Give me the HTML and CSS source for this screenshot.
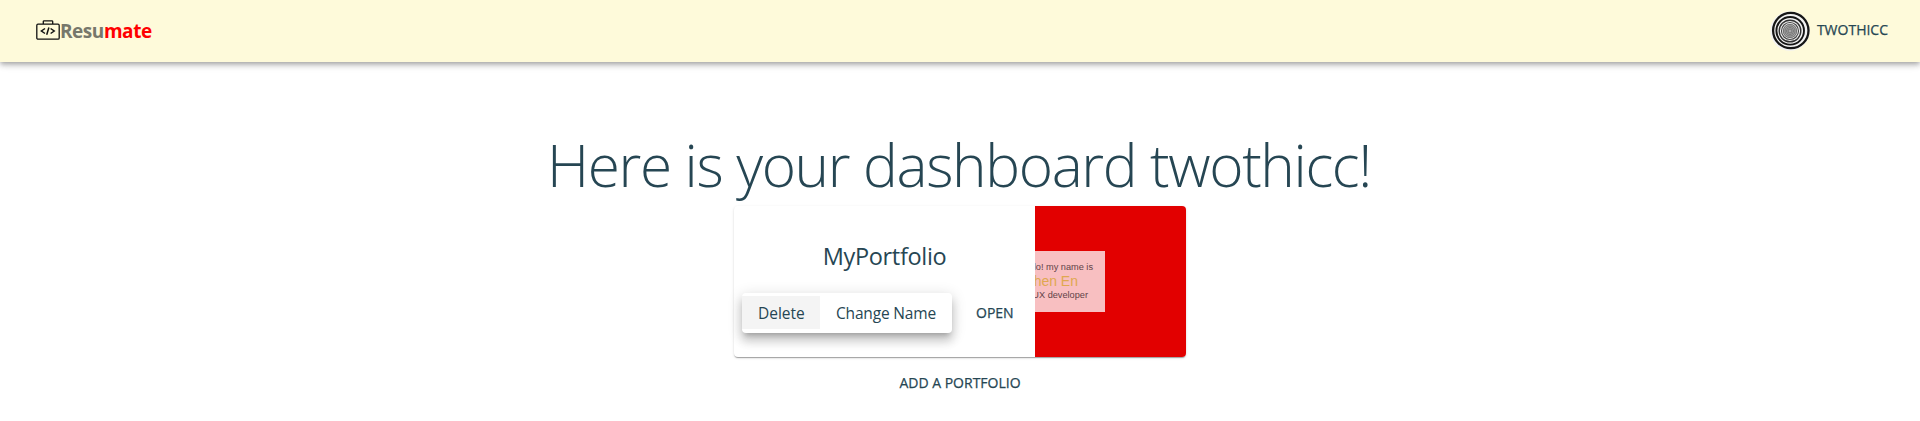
FILE: index.html
```
<!DOCTYPE html>
<html lang="en">
<head>
<meta charset="utf-8">
<title>Resumate</title>
<link rel="stylesheet" href="styles.css">
</head>
<body>
<header class="bar">
  <a class="brand">
    <svg class="brand-icon" width="24" height="20" viewBox="0 0 24 20" fill="none" stroke="#111" stroke-width="1.3">
      <rect x=".8" y="4.2" width="22.4" height="15" rx="1.2"/>
      <path d="M7.3 4V1.6q0-.8.8-.8h7.8q.8 0 .8.8V4"/>
      <path stroke-width="1.500" d="M9 8.500l-3.600 2.500L9 13.500M14.600 8.500l3.600 2.500-3.600 2.500M12.900 7.500l-2.200 7.200"/>
    </svg>
    <span class="brand-a">Resu</span><span class="brand-b">mate</span>
  </a>
  <div class="user">
    <svg class="avatar" width="40" height="40" viewBox="0 0 40 40" fill="none">
      <circle cx="20" cy="20" r="19.700" fill="#f2f2f2"/>
      <g stroke="#161616">
        <circle cx="20.800" cy="19.500" r="17.700" stroke-width="2.300"/>
        <circle cx="20.200" cy="19.800" r="13.800" stroke-width="1.900"/>
        <circle cx="20" cy="20" r="10.800" stroke-width="1.400" stroke="#333"/>
        <circle cx="20" cy="20" r="8.500" stroke-width="1.100" stroke="#444"/>
      </g>
      <circle cx="20" cy="20" r="7.300" fill="#aaa"/>
      <g stroke="#666" stroke-width=".8">
        <circle cx="20" cy="20" r="6.600"/>
        <circle cx="20" cy="20" r="5"/>
        <circle cx="20" cy="20" r="3.500"/>
        <circle cx="20" cy="20" r="2"/>
      </g>
    </svg>
    <span class="user-name">TWOTHICC</span>
  </div>
</header>
<main class="page">
  <h1 class="title">Here is your dashboard twothicc!</h1>
  <section class="card">
    <div class="card-body">
      <h2 class="card-title">MyPortfolio</h2>
      <div class="actions">
        <div class="menu">
          <span class="item item-active"><span class="delete">Delete</span></span>
          <span class="item"><span class="rename">Change Name</span></span>
        </div>
        <span class="open">OPEN</span>
      </div>
    </div>
    <div class="preview">
      <div class="snippet">
        <span class="line hello">lo! my name is</span>
        <span class="line name">hen En</span>
        <span class="line role">UX developer</span>
      </div>
    </div>
  </section>
  <span class="add">ADD A PORTFOLIO</span>
</main>
</body>
</html>
```
FILE: styles.css
```
* { box-sizing: border-box; }
body {
  margin: 0;
  background: #fff;
  color: #264653;
  font-family: "Open Sans", "Noto Sans", sans-serif;
  overflow: hidden;
}
.bar {
  height: 62px;
  padding: 0 32px 0 36px;
  display: flex;
  align-items: center;
  justify-content: space-between;
  background: #fefada;
  box-shadow: 0 2px 4px -1px rgba(0,0,0,.2), 0 4px 5px rgba(0,0,0,.14), 0 1px 10px rgba(0,0,0,.12);
}
.brand { display: flex; align-items: center; font-size: 19px; font-weight: 700; line-height: 28px; letter-spacing: -.45px; }
.brand-icon { margin-right: 0; margin-top: -2px; }
.brand-a { color: #77776b; }
.brand-b { color: #f00; }
.user { display: flex; align-items: center; gap: 7px; margin-top: -2px; }
.avatar { margin-top: 1px; }
.user-name { font-size: 14px; line-height: 24px; -webkit-text-stroke: .25px #264653; }
.page { display: flex; flex-direction: column; align-items: center; padding-top: 66px; }
.title {
  margin: 0 2px 0 0;
  height: 78px;
  line-height: 73px;
  font-size: 58.500px;
  font-weight: 300;
  letter-spacing: -1.350px;
  white-space: nowrap;
}
.card {
  width: 452px;
  height: 151px;
  display: flex;
  border-radius: 4px;
  background: #fff;
  box-shadow: 0 2px 1px -1px rgba(0,0,0,.2), 0 1px 1px rgba(0,0,0,.14), 0 1px 3px rgba(0,0,0,.12);
}
.card-body { width: 301px; padding: 31px 8px 0; }
.card-title { margin: 0; height: 56px; line-height: 38px; font-size: 23.500px; font-weight: 400; letter-spacing: -.32px; text-align: center; }
.actions { display: flex; align-items: center; gap: 24px; }
.menu {
  width: 210px;
  height: 40px;
  display: flex;
  align-items: center;
  flex: none;
  border-radius: 4px;
  background: #fff;
  box-shadow: 0 5px 5px -3px rgba(0,0,0,.2), 0 8px 10px 1px rgba(0,0,0,.14), 0 3px 14px 2px rgba(0,0,0,.12);
}
.item { height: 33px; margin-top: -1px; padding: 0 16px; line-height: 34px; font-size: 15.500px; white-space: nowrap; }
.item-active { width: 78px; background: #f4f4f4; }
.rename { letter-spacing: -.17px; }
.open, .add { font-size: 14px; line-height: 24px; white-space: nowrap; -webkit-text-stroke: .25px #264653; }
.add { margin-top: 14px; }
.preview {
  width: 151px;
  padding-top: 45px;
  overflow: hidden;
  border-radius: 0 4px 4px 0;
  background: #e20000;
}
.snippet {
  width: 70px;
  height: 61px;
  padding: 11px 12px 0 0;
  display: flex;
  flex-direction: column;
  align-items: flex-end;
  background: #f8bfc1;
  color: #624348;
  font-family: "Liberation Sans", sans-serif;
  font-size: 9.200px;
}
.line { white-space: nowrap; flex: none; }
.hello { line-height: 11px; }
.name { margin-right: 15px; line-height: 17px; font-size: 14px; color: #e0a850; }
.role { margin-right: 5px; line-height: 11px; }
```
